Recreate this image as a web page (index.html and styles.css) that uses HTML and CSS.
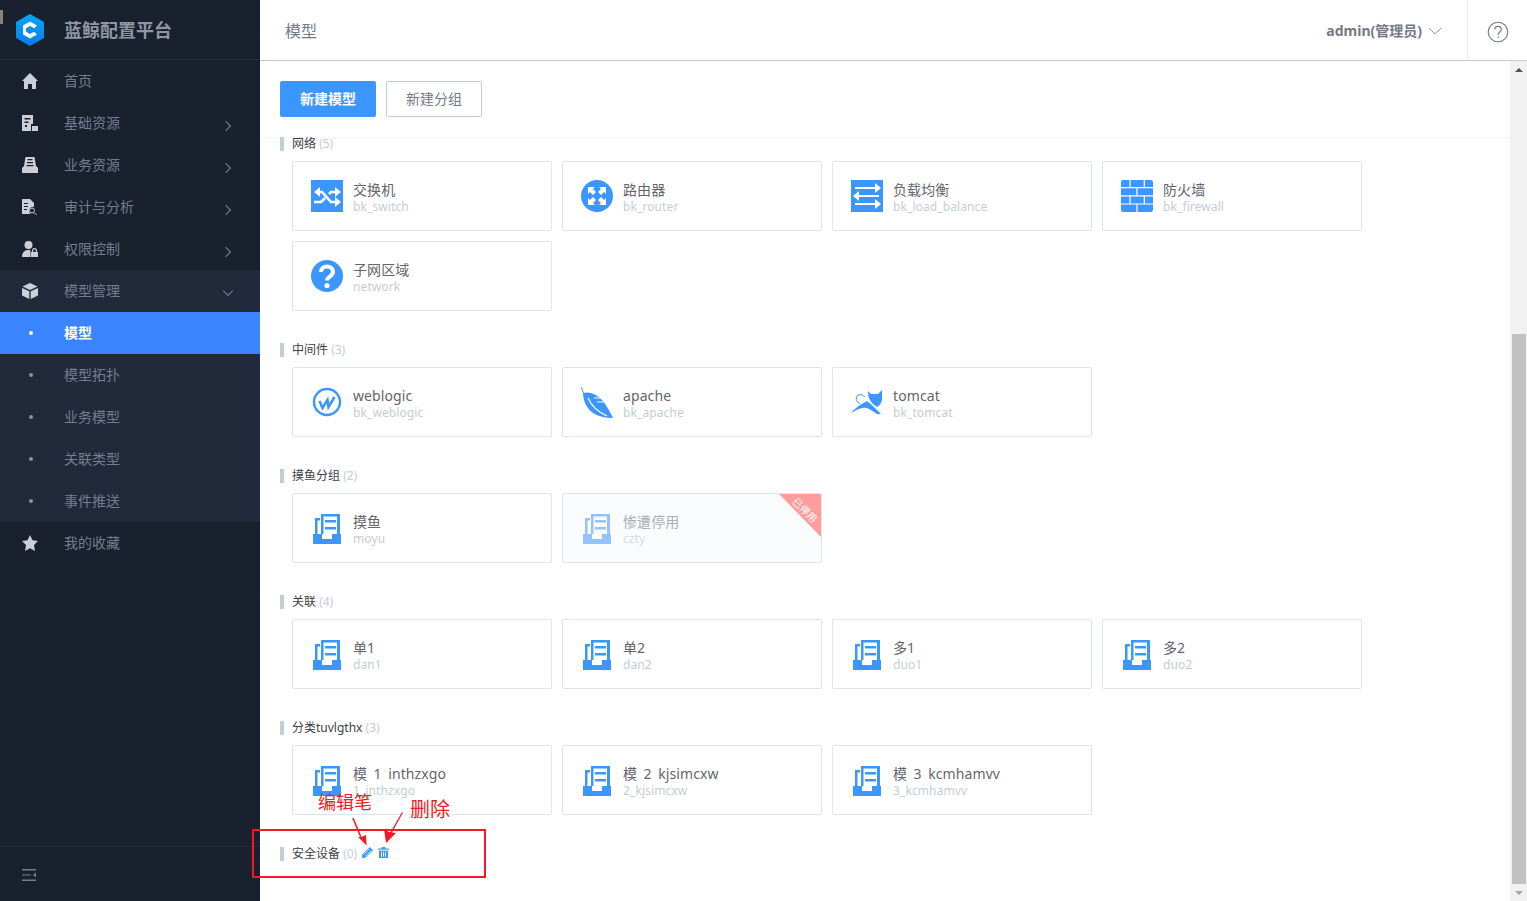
FILE: index.html

```html
<!DOCTYPE html>
<html lang="zh-CN">
<head>
  <meta charset="UTF-8">
  <title>蓝鲸配置平台 - 模型</title>
  <link rel="stylesheet" href="styles.css">
</head>
<body>
  <svg class="defs" width="0" height="0">
    <defs>
      <symbol id="i-model" viewBox="0 0 32 32">
        <path fill="#3c96ff" d="M2 22h9v5h10v-5h9v10H2z"/>
        <path fill="#3c96ff" d="M10 2h19v20h-3V4.500H12.500V22H10zM14 8h11v2.500H14zM14 15h11v2.500H14z"/>
        <path fill="#3c96ff" d="M4 6h5v2.500H6.500V22H4z"/>
      </symbol>
      <symbol id="i-arrow" viewBox="0 0 10 10">
        <path fill="none" stroke="currentColor" d="M3 1l4 4-4 4"/>
      </symbol>
    </defs>
  </svg>

  <div class="app">
    <aside class="sidebar">
      <div class="brand">
        <svg class="brand-logo" viewBox="0 0 28 32">
          <defs>
            <linearGradient id="logoGrad" x1="0" y1="0" x2="0" y2="1">
              <stop offset="0" stop-color="#05a8f5"/>
              <stop offset="1" stop-color="#0b7cf0"/>
            </linearGradient>
          </defs>
          <path fill="url(#logoGrad)" d="M14 0l14 8v16l-14 8-14-8V8z"/>
          <path fill="#fff" d="M14 7.500l7 4-2.800 2.800L14 12l-4 2.300v3.400l4 2.300 4.200-2.300 2.800 2.800-7 4-7-4v-9z"/>
        </svg>
        <span class="brand-name">蓝鲸配置平台</span>
      </div>

      <nav class="nav">
        <a class="nav-item">
          <svg class="nav-icon" viewBox="0 0 16 16"><path d="M8 0l8 8h-2v8h-4v-5H6v5H2V8H0z"/></svg>
          <span class="nav-text">首页</span>
        </a>
        <a class="nav-item">
          <svg class="nav-icon" viewBox="0 0 16 16"><path fill-rule="evenodd" d="M0 0h11v9H9v7H0zM2.500 3v1.500h6V3zm0 3.500V8h4V6.500zM3 10v2h2v-2z"/><path d="M10 11h6v5h-6z"/></svg>
          <span class="nav-text">基础资源</span>
          <svg class="nav-arrow"><use href="#i-arrow"/></svg>
        </a>
        <a class="nav-item">
          <svg class="nav-icon" viewBox="0 0 16 16"><path fill-rule="evenodd" d="M3.500 0h9L14 9l2 2v5H0v-5l2-2zM5.500 2v1.200h5V2zM5 5v1.200h6V5zM4.500 8v1.200h7V8z"/></svg>
          <span class="nav-text">业务资源</span>
          <svg class="nav-arrow"><use href="#i-arrow"/></svg>
        </a>
        <a class="nav-item">
          <svg class="nav-icon" viewBox="0 0 16 16"><path fill-rule="evenodd" d="M0 0h8l4 4v4a4 4 0 0 0-4 6.500L8.500 15H0zM2 4v1h4V4zm0 3v1h4V7zm0 3v1h3v-1z"/><circle cx="10" cy="11.500" r="2.500" fill="none" stroke="#c6cbd4"/><path d="M12 13.500l3 2-.5.5-3-2z"/></svg>
          <span class="nav-text">审计与分析</span>
          <svg class="nav-arrow"><use href="#i-arrow"/></svg>
        </a>
        <a class="nav-item">
          <svg class="nav-icon" viewBox="0 0 16 16"><circle cx="6.500" cy="4" r="4"/><path d="M0 16c0-5 3-7 6.500-7 1 0 1.500 0 2 .5V16zM10 11V9.500a2.500 2.500 0 0 1 5 0V11h1v5H9v-5zm1.200 0h2.600V9.500a1.300 1.300 0 0 0-2.600 0z"/></svg>
          <span class="nav-text">权限控制</span>
          <svg class="nav-arrow"><use href="#i-arrow"/></svg>
        </a>

        <div class="nav-group">
          <a class="nav-item">
            <svg class="nav-icon" viewBox="0 0 16 16"><path d="M8 0l7.500 3.500L8 7 .5 3.500zM0 5l7.300 3.300V16L0 12.500zM16 5L8.700 8.300V16l7.300-3.500z"/></svg>
            <span class="nav-text">模型管理</span>
            <svg class="nav-arrow nav-arrow-open"><use href="#i-arrow"/></svg>
          </a>
          <a class="nav-item sub-item active"><span class="dot"></span><span class="nav-text">模型</span></a>
          <a class="nav-item sub-item"><span class="dot"></span><span class="nav-text">模型拓扑</span></a>
          <a class="nav-item sub-item"><span class="dot"></span><span class="nav-text">业务模型</span></a>
          <a class="nav-item sub-item"><span class="dot"></span><span class="nav-text">关联类型</span></a>
          <a class="nav-item sub-item"><span class="dot"></span><span class="nav-text">事件推送</span></a>
        </div>

        <a class="nav-item">
          <svg class="nav-icon" viewBox="0 0 16 16"><path d="M8 0l2.500 5.200 5.500.8-4 4 1 6-5-2.800L3 16l1-6-4-4 5.500-.8z"/></svg>
          <span class="nav-text">我的收藏</span>
        </a>
      </nav>

      <div class="side-foot">
        <svg class="fold-icon" viewBox="0 0 14 12"><path d="M0 0h14v1.500H0zM0 10.500h14V12H0zM0 5.400h9v1.200H0zM14 3.500v5l-3-2.500z"/></svg>
      </div>
    </aside>

    <div class="main">
      <header class="topbar">
        <h1 class="page-title">模型</h1>
        <div class="user">admin(管理员)
          <svg class="user-arrow" viewBox="0 0 14 8"><path fill="none" stroke="#979ba5" d="M1 1l6 6 6-6"/></svg>
        </div>
        <div class="help">
          <svg viewBox="0 0 22 22" width="22" height="22"><circle cx="11" cy="11" r="9.800" fill="none" stroke="#737987" stroke-width="1.100"/><path fill="none" stroke="#737987" stroke-width="1.200" d="M7.800 8.500c0-4.200 6.500-4.200 6.500 0 0 2.500-3.200 2.600-3.200 5.200"/><circle cx="11.100" cy="16.300" r=".8" fill="#737987"/></svg>
        </div>
      </header>

      <div class="body">
        <div class="content">
          <div class="toolbar">
            <button class="btn btn-primary">新建模型</button>
            <button class="btn">新建分组</button>
          </div>

          <section class="group group-first">
            <h2 class="group-title">网络 <span class="count">(5)</span></h2>
            <div class="cards">
              <div class="card">
                <svg class="card-icon" viewBox="0 0 32 32"><path fill="#3c96ff" d="M0 0h32v32H0z"/><path fill="none" stroke="#fff" stroke-width="2.600" d="M8 12h3l9 10h5M3 22h7l4-4M18 14l2-2h5"/><path fill="#fff" d="M24 7l6 5-6 5zM24 17l6 5-6 5zM9 7l-6 5 6 5z"/></svg>
                <div class="card-text"><div class="card-name">交换机</div><div class="card-id">bk_switch</div></div>
              </div>
              <div class="card">
                <svg class="card-icon" viewBox="0 0 32 32"><circle cx="16" cy="16" r="16" fill="#3c96ff"/><path fill="#fff" d="M7 7h7l-2 2 3 3-3 3-3-3-2 2zM25 7v7l-2-2-3 3-3-3 3-3-2-2zM7 25v-7l2 2 3-3 3 3-3 3 2 2zM25 25h-7l2-2-3-3 3-3 3 3 2-2z"/></svg>
                <div class="card-text"><div class="card-name">路由器</div><div class="card-id">bk_router</div></div>
              </div>
              <div class="card">
                <svg class="card-icon" viewBox="0 0 32 32"><path fill="#3c96ff" d="M0 0h32v32H0z"/><path fill="#fff" d="M4 7h20V3l6 5-6 5V9H4zM28 15H8v-4l-6 5 6 5v-4h20zM4 23h20v-4l6 5-6 5v-4H4z"/></svg>
                <div class="card-text"><div class="card-name">负载均衡</div><div class="card-id">bk_load_balance</div></div>
              </div>
              <div class="card">
                <svg class="card-icon" viewBox="0 0 32 32"><path fill="#3c96ff" d="M2 0h6.500v7H0V2a2 2 0 0 1 2-2zM9.700 0h13v7h-13zM24 0h6a2 2 0 0 1 2 2v5h-8zM0 8.200h15.400v7H0zM16.600 8.200H32v7H16.600zM0 16.400h8.500v7H0zM9.700 16.400h13v7h-13zM24 16.400h8v7h-8zM0 24.600h15.400V32H2a2 2 0 0 1-2-2zM16.600 24.600H32V30a2 2 0 0 1-2 2H16.600z"/></svg>
                <div class="card-text"><div class="card-name">防火墙</div><div class="card-id">bk_firewall</div></div>
              </div>
              <div class="card">
                <svg class="card-icon" viewBox="0 0 32 32"><circle cx="16" cy="16" r="16" fill="#3c96ff"/><path fill="none" stroke="#fff" stroke-width="4" d="M10 12c0-7.500 12-7.500 12 0 0 4.500-6 4.500-6 8.500"/><circle cx="16" cy="25.500" r="2.600" fill="#fff"/></svg>
                <div class="card-text"><div class="card-name">子网区域</div><div class="card-id">network</div></div>
              </div>
            </div>
          </section>

          <section class="group">
            <h2 class="group-title">中间件 <span class="count">(3)</span></h2>
            <div class="cards">
              <div class="card">
                <svg class="card-icon" viewBox="0 0 32 32"><circle cx="16" cy="16" r="13" fill="none" stroke="#3c96ff" stroke-width="2.400"/><path fill="none" stroke="#3c96ff" stroke-width="2.600" d="M8.500 15l3 7 5-8 1 7 6-10"/></svg>
                <div class="card-text"><div class="card-name">weblogic</div><div class="card-id">bk_weblogic</div></div>
              </div>
              <div class="card">
                <svg class="card-icon" viewBox="0 0 32 32"><path fill="none" stroke="#3c96ff" d="M0 1l3 7"/><path fill="#3c96ff" d="M2 7C8 5 16 8 22 15c4 5 7 11 10 17-6 0-14-1-20-5C6 23 2 15 2 7z"/><path fill="none" stroke="#fff" stroke-width="1.200" d="M7 12c3 7 10 14 19 18M13 12h7M16 16h8"/></svg>
                <div class="card-text"><div class="card-name">apache</div><div class="card-id">bk_apache</div></div>
              </div>
              <div class="card">
                <svg class="card-icon" viewBox="0 0 32 32"><path fill="#3c96ff" d="M17 5l3 3h7l4-4v9c0 4-3 7-5 8l-4-3c-3-3-5-7-5-13z"/><path fill="#3c96ff" d="M0 27c4-5 10-9 16-12l6 5 8 8h-4c-6-4-10-7-14-6-4 0-8 3-12 5z"/><path fill="none" stroke="#3c96ff" d="M9 18c-4-2-5-7-2-9 3-1 5 0 7 2"/></svg>
                <div class="card-text"><div class="card-name">tomcat</div><div class="card-id">bk_tomcat</div></div>
              </div>
            </div>
          </section>

          <section class="group">
            <h2 class="group-title">摸鱼分组 <span class="count">(2)</span></h2>
            <div class="cards">
              <div class="card">
                <svg class="card-icon"><use href="#i-model"/></svg>
                <div class="card-text"><div class="card-name">摸鱼</div><div class="card-id">moyu</div></div>
              </div>
              <div class="card card-disabled">
                <svg class="card-icon"><use href="#i-model"/></svg>
                <div class="card-text"><div class="card-name">惨遭停用</div><div class="card-id">czty</div></div>
                <div class="ribbon"><span>已停用</span></div>
              </div>
            </div>
          </section>

          <section class="group">
            <h2 class="group-title">关联 <span class="count">(4)</span></h2>
            <div class="cards">
              <div class="card">
                <svg class="card-icon"><use href="#i-model"/></svg>
                <div class="card-text"><div class="card-name">单1</div><div class="card-id">dan1</div></div>
              </div>
              <div class="card">
                <svg class="card-icon"><use href="#i-model"/></svg>
                <div class="card-text"><div class="card-name">单2</div><div class="card-id">dan2</div></div>
              </div>
              <div class="card">
                <svg class="card-icon"><use href="#i-model"/></svg>
                <div class="card-text"><div class="card-name">多1</div><div class="card-id">duo1</div></div>
              </div>
              <div class="card">
                <svg class="card-icon"><use href="#i-model"/></svg>
                <div class="card-text"><div class="card-name">多2</div><div class="card-id">duo2</div></div>
              </div>
            </div>
          </section>

          <section class="group">
            <h2 class="group-title">分类tuvlgthx <span class="count">(3)</span></h2>
            <div class="cards">
              <div class="card">
                <svg class="card-icon"><use href="#i-model"/></svg>
                <div class="card-text"><div class="card-name">模  1  inthzxgo</div><div class="card-id">1_inthzxgo</div></div>
              </div>
              <div class="card">
                <svg class="card-icon"><use href="#i-model"/></svg>
                <div class="card-text"><div class="card-name">模  2  kjsimcxw</div><div class="card-id">2_kjsimcxw</div></div>
              </div>
              <div class="card">
                <svg class="card-icon"><use href="#i-model"/></svg>
                <div class="card-text"><div class="card-name">模  3  kcmhamvv</div><div class="card-id">3_kcmhamvv</div></div>
              </div>
            </div>
          </section>

          <section class="group">
            <h2 class="group-title">安全设备 <span class="count">(0)</span>
              <svg class="title-icon" viewBox="0 0 12 12"><path fill="#3c96ff" d="M8.500 0L12 3.500 4 11.500 0 12l.5-4z"/><path fill="none" stroke="#fff" stroke-width=".8" d="M2 8l6-6M4 10l6-6"/></svg>
              <svg class="title-icon" viewBox="0 0 12 12"><path fill="#3c96ff" fill-rule="evenodd" d="M4 0h4v1.500h4v1.500H0V1.500h4zM1 4h10v8H1zM3.300 5.500v5h1v-5zm2.200 0v5h1v-5zm2.200 0v5h1v-5z"/></svg>
            </h2>
          </section>
        </div>

        <div class="scrollbar">
          <div class="scroll-btn"><span class="tri-up"></span></div>
          <div class="scroll-track"><div class="scroll-thumb"></div></div>
          <div class="scroll-btn"><span class="tri-down"></span></div>
        </div>
      </div>
    </div>
  </div>

  <!-- red notes drawn over the screenshot -->
  <div class="tab-scrap"></div>
  <div class="note-box"></div>
  <div class="note note-edit">编辑笔</div>
  <div class="note note-del">删除</div>
  <svg class="note-arrows" viewBox="0 0 60 40" width="60" height="40">
    <path fill="#ee1c25" d="M.2 6.300l1.400-.6L9.500 24.500l-1.500.6z"/>
    <path fill="#ee1c25" d="M14.600 33.600L6 25l3.500 0 4.500-2z"/>
    <path fill="#ee1c25" d="M50 0l1 .5-11.500 21-1.300-.8z"/>
    <path fill="#ee1c25" d="M34 31l-2-14 5 3 7 1z"/>
  </svg>
</body>
</html>
```

FILE: styles.css

```css
* { box-sizing: border-box; }
html, body { margin: 0; height: 100%; overflow: hidden; }
body { font-family: "Noto Sans", "Noto Sans CJK SC", sans-serif; font-size: 14px; color: #63656e; background: #fff; }
.defs { position: absolute; }

.app { display: flex; height: 901px; }

/* sidebar */
.sidebar { width: 260px; flex: none; display: flex; flex-direction: column; background: #19212f; }
.brand { height: 60px; flex: none; display: flex; align-items: center; padding-left: 16px; border-bottom: 1px solid #262e3e; }
.brand-logo { width: 28px; height: 32px; margin-right: 20px; }
.brand-name { font-size: 18px; font-weight: 700; color: #9097a3; padding-bottom: 2px; }
.nav { flex: 1; }
.nav-item { height: 42px; display: flex; align-items: center; padding-left: 22px; color: #737d8f; position: relative; }
.nav-icon { width: 16px; height: 16px; margin-right: 26px; fill: #ccd0d6; }
.nav-text { line-height: 42px; }
.nav-arrow { width: 10px; height: 10px; position: absolute; right: 27px; top: 19px; color: #6f7a8d; transform: scale(1.2); }
.nav-arrow-open { transform: rotate(90deg) scale(1.2); top: 18px; }
.nav-group { background: #212a3b; }
.sub-item .dot { width: 4px; height: 4px; border-radius: 50%; background: #8a93a3; margin: 0 31px 0 7px; }
.sub-item.active { background: #3a84ff; color: #fff; font-weight: 700; }
.sub-item.active .dot { background: #fff; }
.side-foot { height: 55px; flex: none; border-top: 1px solid #262e3e; display: flex; align-items: center; padding-left: 22px; }
.fold-icon { width: 14px; height: 12px; fill: #737d8f; margin-top: 1px; }

/* top bar */
.main { flex: 1; min-width: 0; display: flex; flex-direction: column; }
.topbar { height: 61px; flex: none; display: flex; align-items: center; padding-left: 25px; border-bottom: 1px solid #c3cdd7; }
.page-title { flex: 1; margin: 0; font-size: 16px; font-weight: 400; color: #737987; }
.user { display: flex; align-items: center; font-weight: 700; color: #737987; margin-right: 25px; }
.user-arrow { width: 14px; height: 8px; margin: 2px 0 0 6px; }
.help { width: 60px; height: 60px; border-left: 1px solid #e8ebf0; display: flex; align-items: center; justify-content: center; padding-top: 4px; }

.body { flex: 1; min-height: 0; display: flex; }
.content { flex: 1; min-width: 0; }
.toolbar { height: 77px; display: flex; gap: 10px; padding: 20px 0 0 20px; border-bottom: 1px solid #f5f6f8; box-shadow: 0 2px 3px rgba(0, 0, 0, .01); }
.btn { width: 96px; height: 36px; font: inherit; color: #737987; background: #fff; border: 1px solid #c3cdd7; border-radius: 2px; padding: 0 0 2px; }
.btn-primary { background: #3c96ff; border-color: #3c96ff; color: #fff; font-weight: 700; }

/* model groups */
.group { margin-top: 32px; }
.group-first { margin-top: -1px; }
.group-title { display: flex; align-items: center; height: 14px; margin: 0 0 10px 20px; padding-left: 8px; border-left: 4px solid #c3cdd7; font-size: 12px; font-weight: 400; line-height: 14px; color: #3b3f4a; white-space: pre; }
.count { color: #c3cdd7; }
.title-icon { width: 11px; height: 11px; margin: 0 0 3px 5px; }
.cards { display: flex; flex-wrap: wrap; gap: 10px; padding-left: 32px; max-width: 1110px; }
.card { width: 260px; height: 70px; display: flex; align-items: center; padding-left: 18px; background: #fff; border: 1px solid #dde4eb; border-radius: 2px; position: relative; }
.card-icon { width: 32px; height: 32px; flex: none; margin-right: 10px; }
.card-text { min-width: 0; white-space: pre; margin-top: 2px; }
.card-name { font-size: 14px; line-height: 20px; letter-spacing: .1px; word-spacing: -.5px; color: #63656e; }
.card-id { font-size: 12px; line-height: 15px; letter-spacing: .1px; color: #c3cdd7; margin-top: -1px; }
.card-disabled { background: #fbfcfe; overflow: hidden; }
.card-disabled .card-icon { opacity: .55; }
.card-disabled .card-name { color: #a9adb5; }
.card-disabled .card-id { color: #d5dbe3; }
.ribbon { position: absolute; top: -1px; right: -1px; width: 44px; height: 45px; background: #ff9c9c; clip-path: polygon(0 0, 100% 0, 100% 100%); }
.ribbon span { position: absolute; top: 11px; left: 9px; width: 36px; font-size: 10px; line-height: 12px; text-align: center; color: #fff; transform: rotate(45deg); }

/* fake scrollbar */
.scrollbar { width: 17px; flex: none; display: flex; flex-direction: column; background: #f1f1f1; }
.scroll-btn { height: 17px; flex: none; display: flex; align-items: center; justify-content: center; }
.tri-up { border: 4px solid transparent; border-top: 0; border-bottom: 4px solid #505050; }
.tri-down { border: 4px solid transparent; border-bottom: 0; border-top: 4px solid #a3a3a3; }
.scroll-track { flex: 1; padding: 256px 1px 0 2px; }
.scroll-thumb { height: 100%; background: #c1c1c1; }

/* annotations */
.tab-scrap { position: absolute; left: 0; top: 10px; width: 3px; height: 14px; background: #8a8078; }
.note-box { position: absolute; left: 252px; top: 829px; width: 234px; height: 49px; border: 2px solid #ee1c25; }
.note { position: absolute; font-size: 18px; line-height: 24px; color: #ee1c25; }
.note-edit { left: 318px; top: 790px; }
.note-del { left: 410px; top: 798px; font-size: 20px; }
.note-arrows { position: absolute; left: 352px; top: 812px; }
```
